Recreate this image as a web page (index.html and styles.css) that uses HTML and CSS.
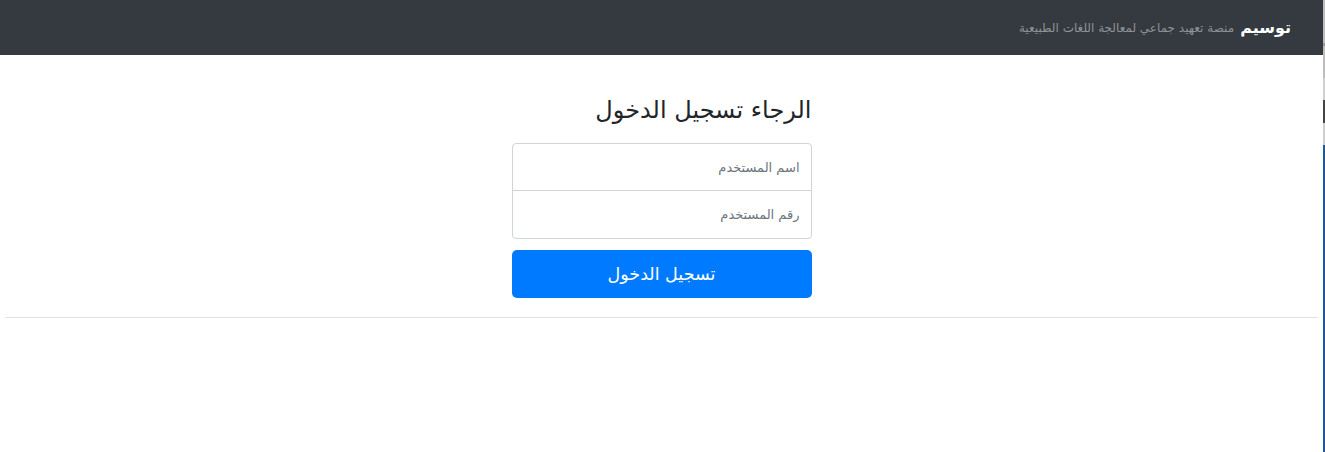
FILE: index.html
```html
<!DOCTYPE html>
<html lang="ar">
<head>
<meta charset="utf-8">
<title>توسيم</title>
<link rel="stylesheet" href="styles.css">
</head>
<body>
<div class="page">
  <div class="main" dir="rtl">
    <nav class="navbar">
      <span class="brand">توسيم</span>
      <span class="tagline">منصة تعهيد جماعي لمعالجة اللغات الطبيعية</span>
    </nav>
    <div class="content">
      <form class="signin">
        <h3 class="title">الرجاء تسجيل الدخول</h3>
        <input class="field field-top" type="text" placeholder="اسم المستخدم">
        <input class="field field-bottom" type="text" placeholder="رقم المستخدم">
        <button class="submit" type="button">تسجيل الدخول</button>
      </form>
      <hr class="divider">
    </div>
  </div>
  <div class="edge"></div>
</div>
</body>
</html>
```
FILE: styles.css
```css
* { box-sizing: border-box; }
html, body { margin: 0; padding: 0; background: #fff; }
body {
  font-family: "DejaVu Sans", "Noto Sans", sans-serif;
  color: #212529;
  height: 452px;
  overflow: hidden;
}
.page {
  display: flex;
  height: 452px;
}
.main {
  flex: 1;
  min-width: 0;
}
.edge {
  width: 2px;
  flex: none;
  background: linear-gradient(to bottom,
    #bdbdbd 0, #bdbdbd 43px, #9a9a9a 43px, #9a9a9a 46px,
    #bdbdbd 46px, #bdbdbd 78px, #d0d0d0 78px, #d0d0d0 100px,
    #444 100px, #444 123px, #cfcfcf 123px, #cfcfcf 145px,
    #1d5a96 145px, #1d5a96 100%);
}
.navbar {
  height: 55px;
  background: #343a40;
  display: flex;
  align-items: center;
  gap: 6px;
  padding: 0 32px 0 16px;
}
.brand {
  color: #fff;
  font-weight: bold;
  font-size: 16px;
}
.tagline {
  color: #8f9397;
  font-size: 12px;
}
.content {
  padding-top: 23px;
}
.signin {
  width: 330px;
  padding: 15px;
  margin: 0 auto;
  display: flex;
  flex-direction: column;
}
.title {
  margin: 0 0 16px;
  font-size: 24px;
  font-weight: normal;
  line-height: 34px;
  height: 34px;
}
.field {
  display: block;
  width: 100%;
  height: 48px;
  padding: 0 11px;
  font-family: inherit;
  font-size: 13px;
  color: #495057;
  border: 1px solid #ced4da;
  background: #fff;
  outline: none;
}
.field::placeholder { color: #6c757d; }
.field-top {
  border-radius: 4px 4px 0 0;
}
.field-bottom {
  margin-top: -1px;
  height: 49px;
  border-radius: 0 0 4px 4px;
}
.submit {
  margin-top: 11px;
  height: 48px;
  width: 100%;
  border: 0;
  border-radius: 5px;
  background: #007bff;
  color: #fff;
  font-family: inherit;
  font-size: 17.5px;
}
.divider {
  margin: 4px 5px 0;
  border: 0;
  border-top: 1px solid #e2e2e2;
}
```
